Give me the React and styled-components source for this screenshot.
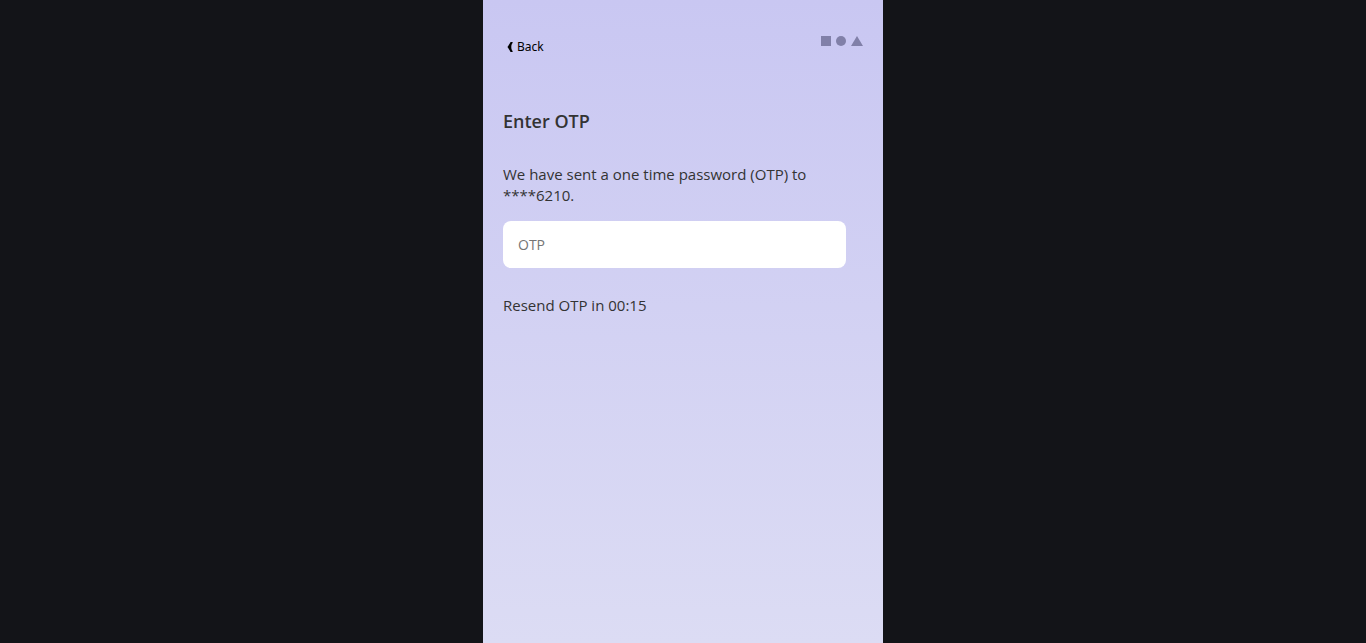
import React, { useState } from "react";
import styled, { createGlobalStyle } from "styled-components";

const GlobalStyle = createGlobalStyle`
  *, *::before, *::after {
    box-sizing: border-box;
  }

  body {
    margin: 0;
    background: #131418;
    color: #333;
    font-family: "Open Sans", "Noto Sans", sans-serif;
    font-size: 15px;
    line-height: 21px;
  }
`;

const Screen = styled.main`
  display: flex;
  flex-direction: column;
  width: 100%;
  max-width: 400px;
  min-height: 100vh;
  margin: 0 auto;
  padding: 36px 20px 20px;
  background: linear-gradient(to bottom, #c9c7f2, #dcdcf4);
`;

const Header = styled.header`
  display: flex;
  align-items: flex-start;
  justify-content: space-between;
`;

const BackButton = styled.button`
  display: flex;
  align-items: center;
  gap: 4px;
  padding: 0 4px;
  border: 0;
  background: none;
  color: #000;
  font-family: "Noto Sans", sans-serif;
  font-size: 12px;
  line-height: 22px;
  cursor: pointer;
`;

const Shapes = styled.svg`
  display: block;
  width: 42px;
  height: 10px;
  fill: #8180a8;
`;

const Form = styled.form`
  display: flex;
  flex-direction: column;
  margin-top: 50px;
`;

const Title = styled.h1`
  margin: 0;
  font-size: 18px;
  font-weight: 600;
  line-height: 26px;
`;

const Message = styled.label`
  margin-top: 30px;
`;

const CodeInput = styled.input`
  width: 100%;
  max-width: 343px;
  height: 47px;
  margin-top: 15px;
  padding: 0 15px;
  border: 0;
  border-radius: 8px;
  background: #fff;
  color: #333;
  font: inherit;
  font-size: 14px;

  &::placeholder {
    color: #757575;
    opacity: 1;
  }
`;

const Resend = styled.p`
  margin: 27px 0 0;
`;

export default function App() {
  const [code, setCode] = useState("");

  return (
    <>
      <GlobalStyle />
      <Screen>
        <Header>
          <BackButton type="button">
            <svg width="6" height="10" viewBox="0 0 6 10" aria-hidden="true">
              <path d="M3.6 0H5.6V1C4.7 2 4.3 3.4 4.3 5C4.3 6.6 4.7 8 5.6 9V10H3.6C2.7 8.6 2 7 0.4 5C2 3 2.7 1.4 3.6 0Z" />
            </svg>
            Back
          </BackButton>
          <Shapes viewBox="0 0 42 10" aria-hidden="true">
            <rect width="10" height="10" />
            <circle cx="20" cy="5" r="5" />
            <path d="M36 0L42 10H30Z" />
          </Shapes>
        </Header>
        <Form onSubmit={(event) => event.preventDefault()}>
          <Title>Enter OTP</Title>
          <Message htmlFor="otp">
            We have sent a one time password (OTP) to ****6210.
          </Message>
          <CodeInput
            id="otp"
            inputMode="numeric"
            autoComplete="one-time-code"
            placeholder="OTP"
            value={code}
            onChange={(event) => setCode(event.target.value)}
          />
          <Resend>Resend OTP in 00:15</Resend>
        </Form>
      </Screen>
    </>
  );
}
